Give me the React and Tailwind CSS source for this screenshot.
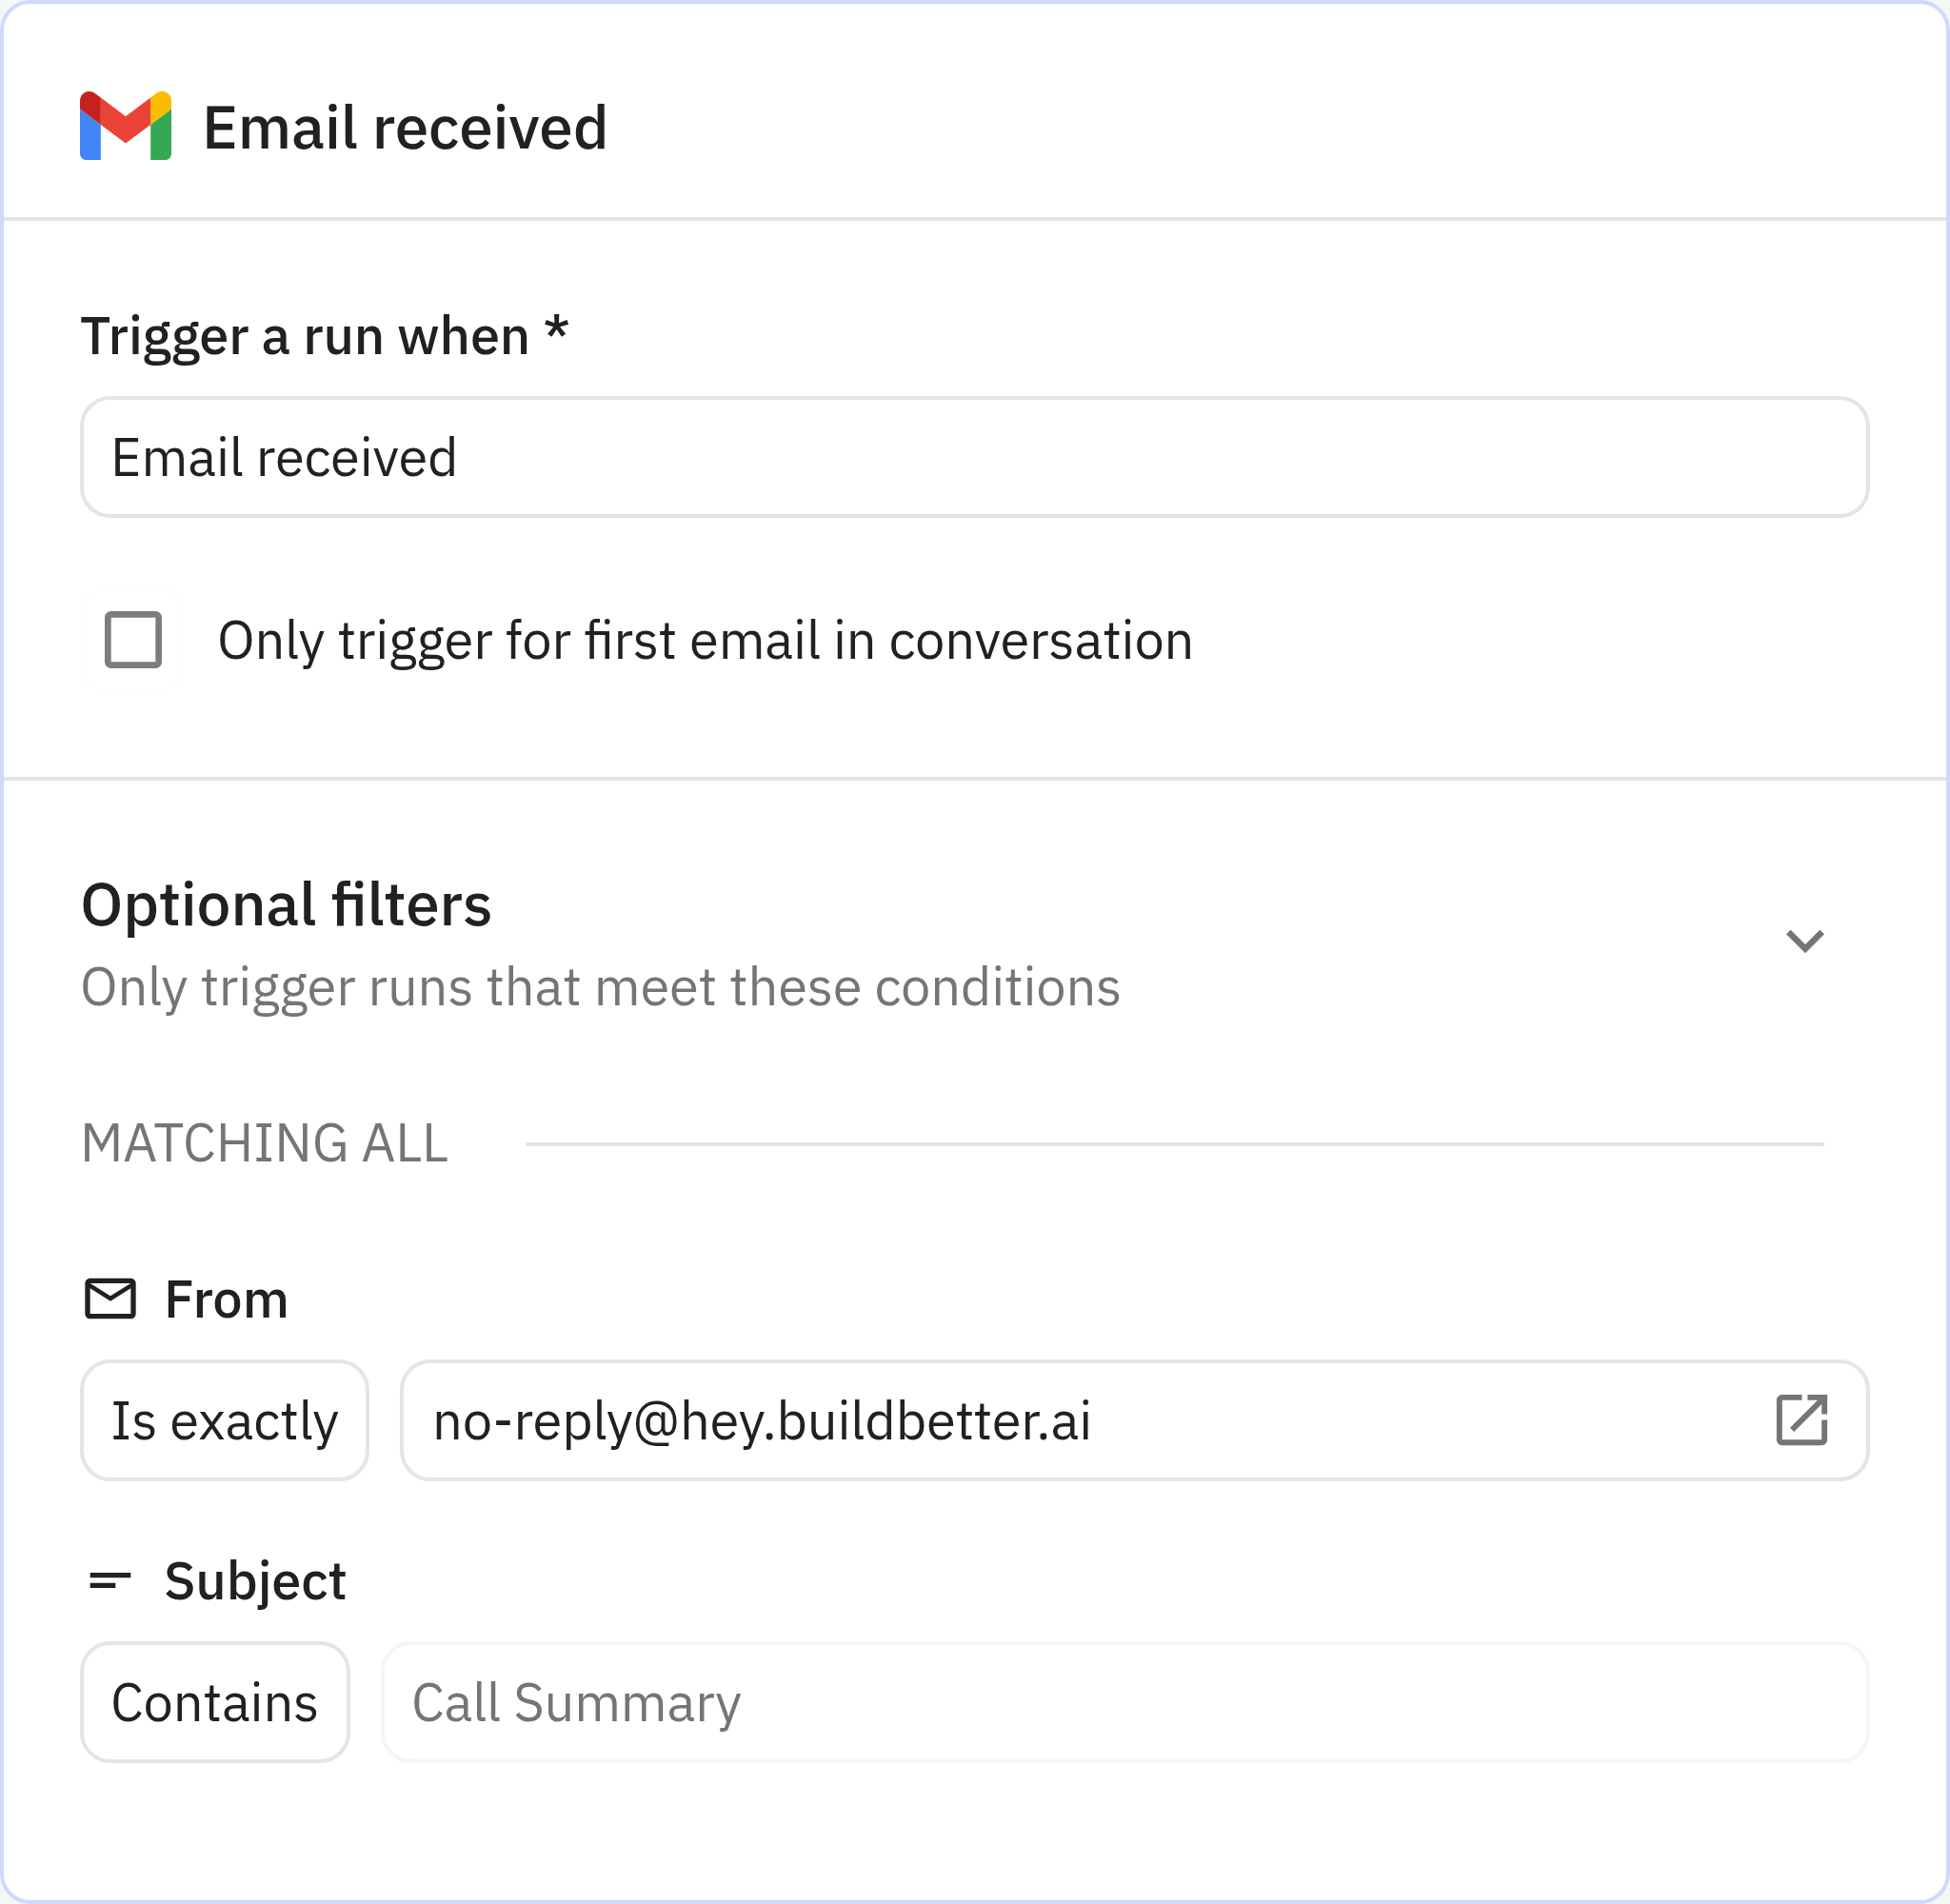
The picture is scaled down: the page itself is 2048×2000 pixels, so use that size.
import clsx from "clsx";

const GmailLogo = () => (
  <svg viewBox="52 42 88 66" className="h-[72px] w-24 shrink-0">
    <path fill="#4285f4" d="M58 108h14V74L52 59v43c0 3.32 2.69 6 6 6" />
    <path fill="#34a853" d="M120 108h14c3.32 0 6-2.69 6-6V59l-20 15" />
    <path fill="#fbbc04" d="M120 48v26l20-15v-8c0-7.42-8.47-11.65-14.4-7.2" />
    <path fill="#ea4335" d="M72 74V48l24 18 24-18v26L96 92" />
    <path
      fill="#c5221f"
      d="M52 51v8l20 15V48l-5.6-4.2c-5.94-4.45-14.4-.22-14.4 7.2"
    />
  </svg>
);

const Icon = ({ d, className }) => (
  <svg
    viewBox="0 0 24 24"
    fill="currentColor"
    className={clsx("shrink-0", className)}
  >
    <path d={d} />
  </svg>
);

const icons = {
  mail: "M22 6c0-1.1-.9-2-2-2H4c-1.1 0-2 .9-2 2v12c0 1.1.9 2 2 2h16c1.1 0 2-.9 2-2V6zm-2 0l-8 5-8-5h16zm0 12H4V8l8 5 8-5v10z",
  shortText: "M4 9h16v2H4V9zm0 4h10v2H4v-2z",
  chevron: "M16.59 8.59L12 13.17 7.41 8.59 6 10l6 6 6-6z",
  launch:
    "M19 19H5V5h7V3H5c-1.11 0-2 .9-2 2v14c0 1.1.89 2 2 2h14c1.1 0 2-.9 2-2v-7h-2v7zM14 3v2h3.59l-9.83 9.83 1.41 1.41L19 6.41V10h2V3h-7z",
  checkbox:
    "M19 5v14H5V5h14m0-2H5c-1.1 0-2 .9-2 2v14c0 1.1.9 2 2 2h14c1.1 0 2-.9 2-2V5c0-1.1-.9-2-2-2z",
};

const Field = ({ className, children }) => (
  <div
    className={clsx(
      "flex h-32 items-center rounded-[32px] border-4 px-7 pb-0.5 whitespace-nowrap",
      className
    )}
  >
    {children}
  </div>
);

const FilterLabel = ({ icon, children }) => (
  <div className="flex h-20 items-center gap-6 font-medium">
    <Icon d={icon} className="size-16" />
    <span className="pb-0.5">{children}</span>
  </div>
);

export default function App() {
  return (
    <div className="h-[2000px] w-[2048px] bg-[#f7f7f7]">
      <div className="flex h-full flex-col rounded-[32px] border-4 border-[#d0d8ff] bg-white font-['IBM_Plex_Sans',sans-serif] text-[56px] leading-[80px] tracking-[-0.18px] text-[#212121] [font-feature-settings:'liga']">
        <div className="flex h-[228px] items-center gap-8 border-b-4 border-[#e5e5e5] px-20 pt-8">
          <GmailLogo />
          <h1 className="text-[64px] font-medium">Email received</h1>
        </div>

        <div className="flex h-[588px] flex-col border-b-4 border-[#e5e5e5] px-20 pt-20">
          <label className="-mt-px font-medium">Trigger a run when *</label>
          <Field className="mt-[25px] border-[#e5e5e5]">Email received</Field>
          <div className="mt-[76px] flex items-center">
            <div className="ml-1 flex size-[104px] items-center justify-center rounded-2xl border-2 border-[#fdfdfd]">
              <Icon d={icons.checkbox} className="size-20 text-[#7d7d7d]" />
            </div>
            <span className="ml-9 pb-0.5">
              Only trigger for first email in conversation
            </span>
          </div>
        </div>

        <div className="px-20 pt-20">
          <div className="flex items-center justify-between">
            <div>
              <h2 className="text-[64px] leading-[96px] font-medium">
                Optional filters
              </h2>
              <p className="-mt-px mb-px text-[#757575]">
                Only trigger runs that meet these conditions
              </p>
            </div>
            <Icon d={icons.chevron} className="mr-7 size-20 text-[#757575]" />
          </div>

          <div className="mt-[84px] flex h-20 items-center">
            <span className="w-[468px] pb-0.5 text-[#757575]">
              MATCHING ALL
            </span>
            <div className="mt-1 mr-12 h-1 grow bg-[#e5e5e5]" />
          </div>

          <div className="mt-[84px]">
            <FilterLabel icon={icons.mail}>From</FilterLabel>
            <div className="mt-6 flex gap-8">
              <Field className="w-[304px] border-[#e5e5e5]">Is exactly</Field>
              <Field className="grow justify-between border-[#e5e5e5] pl-[30px]">
                no-reply@hey.buildbetter.ai
                <Icon
                  d={icons.launch}
                  className="mt-px mr-[4.5px] size-[71px] text-[#757575]"
                />
              </Field>
            </div>
          </div>

          <div className="mt-16">
            <FilterLabel icon={icons.shortText}>Subject</FilterLabel>
            <div className="mt-6 flex gap-8">
              <Field className="w-[284px] border-[#e5e5e5]">Contains</Field>
              <Field className="grow border-[#f5f5f5] text-[#757575]">
                Call Summary
              </Field>
            </div>
          </div>
        </div>
      </div>
    </div>
  );
}
